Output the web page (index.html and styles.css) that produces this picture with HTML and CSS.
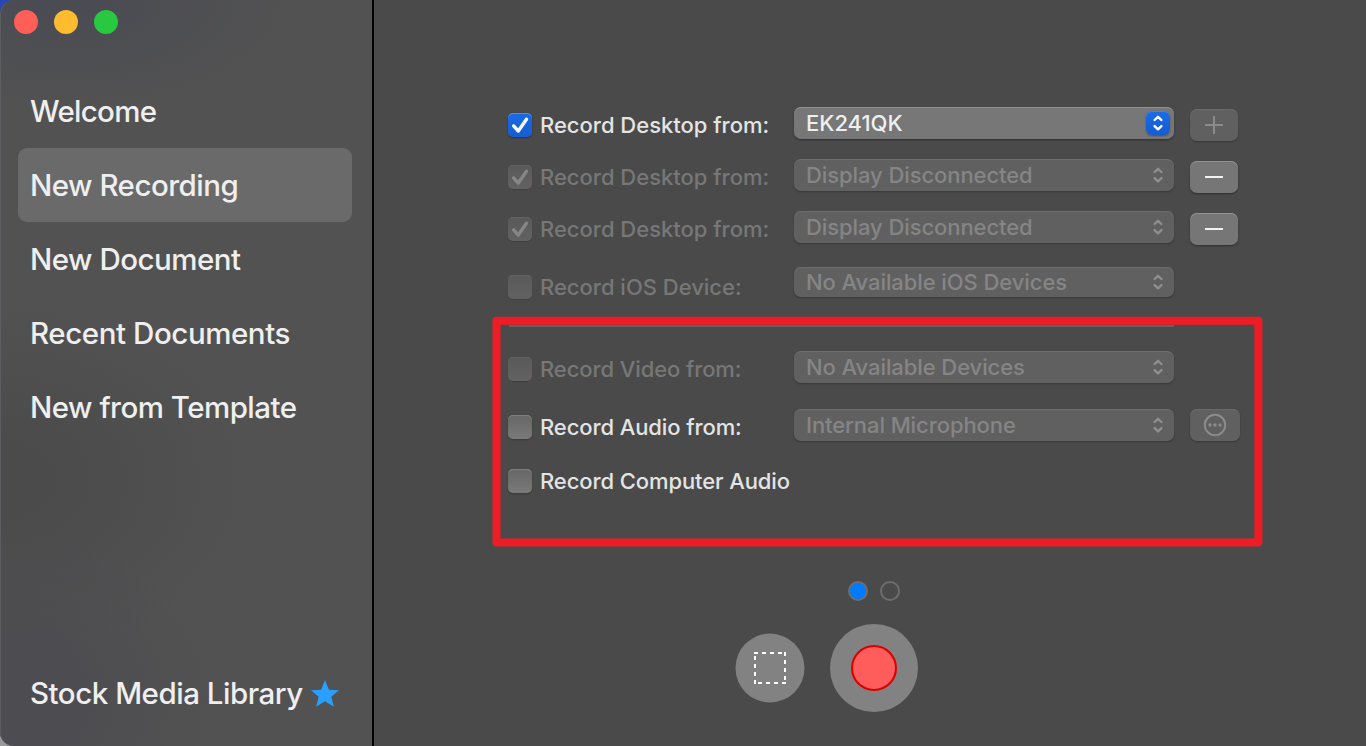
FILE: index.html
```html
<!DOCTYPE html>
<html lang="en">
<head>
<meta charset="utf-8">
<title>New Recording</title>
<link rel="stylesheet" href="styles.css">
</head>
<body>
<svg class="defs" width="0" height="0" aria-hidden="true">
  <symbol id="chevrons" viewBox="0 0 24 24"><path d="M8.600 9 12 5.800l3.400 3.200M8.600 15.100l3.400 3.200 3.400-3.200"/></symbol>
  <symbol id="check" viewBox="0 0 24 24"><path d="M5.600 12.900 10.300 18 18.500 6.200"/></symbol>
</svg>
<div class="window">
  <aside class="sidebar">
    <div class="lights"><i class="light close"></i><i class="light minimize"></i><i class="light zoom"></i></div>
    <nav class="menu">
      <a class="item welcome"><span>Welcome</span></a>
      <a class="item selected"><span>New Recording</span></a>
      <a class="item"><span>New Document</span></a>
      <a class="item recent"><span>Recent Documents</span></a>
      <a class="item"><span>New from Template</span></a>
    </nav>
    <a class="item library"><span>Stock Media Library</span><svg class="star" viewBox="0 0 28 27"><path d="M14 0l3.900 9.700L28 10.200l-7.700 6.600L22.900 26.800 14 21.300 5.100 26.800 7.700 16.800 0 10.200l10.100-.5z"/></svg></a>
  </aside>
  <main class="content">
    <section class="form">
      <div class="row">
        <span class="checkbox on"><svg><use href="#check"/></svg></span><span class="label desktop">Record Desktop from:</span>
        <div class="select active"><span class="value device">EK241QK</span><span class="arrows"><svg><use href="#chevrons"/></svg></span></div>
        <span class="button off"><svg viewBox="0 0 48 32"><path d="M15 16h18M24 7v18"/></svg></span>
      </div>
      <div class="row disabled">
        <span class="checkbox"><svg><use href="#check"/></svg></span><span class="label desktop">Record Desktop from:</span>
        <div class="select"><span class="value">Display Disconnected</span><span class="arrows"><svg><use href="#chevrons"/></svg></span></div>
        <span class="button"><svg viewBox="0 0 48 32"><path d="M15 16h18"/></svg></span>
      </div>
      <div class="row disabled before-ios">
        <span class="checkbox"><svg><use href="#check"/></svg></span><span class="label desktop">Record Desktop from:</span>
        <div class="select"><span class="value">Display Disconnected</span><span class="arrows"><svg><use href="#chevrons"/></svg></span></div>
        <span class="button"><svg viewBox="0 0 48 32"><path d="M15 16h18"/></svg></span>
      </div>
      <div class="row disabled ios">
        <span class="checkbox"></span><span class="label desktop">Record iOS Device:</span>
        <div class="select"><span class="value">No Available iOS Devices</span><span class="arrows"><svg><use href="#chevrons"/></svg></span></div>
      </div>
      <div class="separator"></div>
      <div class="row disabled video">
        <span class="checkbox"></span><span class="label">Record Video from:</span>
        <div class="select"><span class="value">No Available Devices</span><span class="arrows"><svg><use href="#chevrons"/></svg></span></div>
      </div>
      <div class="row audio">
        <span class="checkbox"></span><span class="label">Record Audio from:</span>
        <div class="select"><span class="value">Internal Microphone</span><span class="arrows"><svg><use href="#chevrons"/></svg></span></div>
        <span class="button off more"><svg viewBox="0 0 50 32"><circle cx="25" cy="16" r="10.200"/><path class="ellipsis" d="M20 16h.01M25 16h.01M30 16h.01"/></svg></span>
      </div>
      <div class="row computer">
        <span class="checkbox"></span><span class="label">Record Computer Audio</span>
      </div>
    </section>
    <div class="pages"><i class="page current"></i><i class="page"></i></div>
    <div class="controls">
      <svg class="area" viewBox="0 0 70 70"><circle cx="35" cy="35" r="34.500"/><path transform="translate(19 19)" d="M0 1h4M8 1h4M16 1h4M24 1h4M31 0v4M31 8v4M31 16v4M31 24v4M4 31h4M12 31h4M20 31h4M28 31h4M1 4v4M1 12v4M1 20v4M1 28v4"/></svg>
      <span class="record"><i></i></span>
    </div>
    <svg class="highlight" viewBox="0 0 772 232"><rect x="5.500" y="4.700" width="761.900" height="221.800"/></svg>
  </main>
</div>
</body>
</html>
```

FILE: styles.css
```css
* { box-sizing: border-box; }
body { margin: 0; background: linear-gradient(#2647b5 0 50%, #999 50%); font-family: Inter, "Liberation Sans", sans-serif; }
.defs { display: block; position: absolute; }
.window { display: flex; width: 1366px; height: 746px; overflow: hidden; border-radius: 14px 0 0 14px; background: #4a4a4a; }
.sidebar {
  display: flex; flex-direction: column; width: 374px; height: 746px;
  border-right: 2px solid #000;
  box-shadow: inset 1px 0 0 #5c5d60;
  border-radius: 14px 0 0 14px;
  background:
    radial-gradient(ellipse 230px 110px at 65px 0, #4b4c53 0 15%, transparent 100%),
    radial-gradient(ellipse 220px 170px at 0 700px, #4c4c51 0 20%, transparent 100%),
    radial-gradient(ellipse 250px 180px at 0 480px, #4b4b4c 0 20%, transparent 100%),
    #525252;
}
.lights { display: flex; gap: 16px; padding: 10px 0 0 14px; height: 74px; }
.light { width: 24px; height: 24px; border-radius: 50%; }
.close { background: #ff5f57; }
.minimize { background: #febc2e; }
.zoom { background: #28c840; }
.menu { flex: 1; }
.item {
  display: flex; align-items: center; height: 74px; margin: 0 20px 0 18px; padding-left: 12px;
  border-radius: 9px; color: #efefef; font-size: 29.500px; font-weight: 450; letter-spacing: -0.520px; white-space: nowrap;
}
.welcome { letter-spacing: -0.700px; }
.recent { letter-spacing: -0.430px; }
.selected { background: #6a6a6a; }
.library { margin-bottom: 16px; letter-spacing: -0.480px; }
.star { width: 28px; height: 27px; margin-left: 8.500px; fill: #2a9fff; }

.content { position: relative; flex: 1; }
.form { height: 581px; padding: 107px 0 0 134px; }
.row { display: flex; align-items: flex-start; height: 52px; color: #e4e4e4; font-size: 22px; font-weight: 500; white-space: nowrap; }
.before-ios { height: 56px; }
.ios, .video { height: 58px; }
.audio { height: 54px; }
.checkbox {
  width: 24px; height: 24px; margin: 6px 8px 0 0; border-radius: 5px;
  background: linear-gradient(#676767, #797979);
  box-shadow: 0 1px 2px #00000040, inset 0 1px #808080;
}
.checkbox svg { display: block; width: 24px; height: 24px; fill: none; stroke: #f4f7ff; stroke-width: 3.400; stroke-linecap: round; stroke-linejoin: round; }
.checkbox.on { background: linear-gradient(#1b6be8, #155ccf); box-shadow: 0 1px 2px #00000055, inset 0 1px #4d8ced; }
.disabled .checkbox { background: linear-gradient(#595959, #626262); box-shadow: 0 1px 1px #00000025, inset 0 1px #636363; }
.disabled .checkbox svg { stroke: #868686; }
.label { width: 254px; height: 24px; margin-top: 6px; line-height: 24px; letter-spacing: -0.100px; }
.desktop { letter-spacing: -0.010px; }
.disabled .label { color: #777; }
.select {
  display: flex; align-items: center; justify-content: space-between; width: 380px; height: 32px;
  margin-right: 16px; padding: 0 4px 0 12px; border-radius: 7px; background: #606060; color: #858585;
  box-shadow: 0 1px 2px #00000040, inset 0 1px #6d6d6d; letter-spacing: -0.080px;
}
.select.active { background: #777; color: #efefef; box-shadow: 0 1px 2px #00000066, inset 0 1px #929292; letter-spacing: 0; }
.arrows { width: 24px; height: 24px; border-radius: 6px; }
.active .arrows { background: linear-gradient(#1b6be8, #155ccf); box-shadow: 0 1px 2px #00000055, inset 0 1px #4282e8; }
.arrows svg { display: block; width: 24px; height: 24px; fill: none; stroke: #8e8e8e; stroke-width: 2.400; stroke-linecap: round; stroke-linejoin: round; }
.active .arrows svg { stroke: #fff; }
.ios .select { height: 30px; }
.ios .checkbox, .ios .label { margin-top: 8px; }
.button {
  width: 48px; height: 32px; margin-top: 2px; border-radius: 7px; background: #767676;
  box-shadow: 0 1px 2px #00000066, inset 0 1px #919191;
}
.button svg { display: block; width: 100%; height: 32px; fill: none; stroke: #f2f2f2; stroke-width: 2; }
.button.off { background: #606060; box-shadow: 0 1px 2px #00000040, inset 0 1px #6b6b6b; }
.button.off svg { stroke: #8b8b8b; }
.more { width: 50px; margin-top: 0; }
.button .ellipsis { stroke-width: 3.400; stroke-linecap: round; }
.separator { width: 665px; height: 2px; margin: 0 0 24px 1px; background: #626260; }

.pages { display: flex; gap: 12px; padding-left: 474px; height: 43px; }
.page { width: 20px; height: 20px; border: 2px solid #6d6d6d; border-radius: 50%; }
.current { background: #007aff; }
.controls { display: flex; align-items: center; gap: 25px; padding-left: 361px; height: 88px; }
.area { width: 70px; height: 70px; fill: #828282; }
.area path { fill: none; stroke: #fff; stroke-width: 2; }
.record { display: flex; align-items: center; justify-content: center; width: 88px; height: 88px; border-radius: 50%; background: #828282; }
.record i { width: 46px; height: 46px; border: 2px solid #d90000; border-radius: 50%; background: #ff5c5c; }
/* callout frame drawn over the audio and video options */
.highlight { position: absolute; left: 117px; top: 316px; width: 772px; height: 232px; fill: none; stroke: #ee1c25; stroke-width: 8; stroke-linejoin: round; }
```
